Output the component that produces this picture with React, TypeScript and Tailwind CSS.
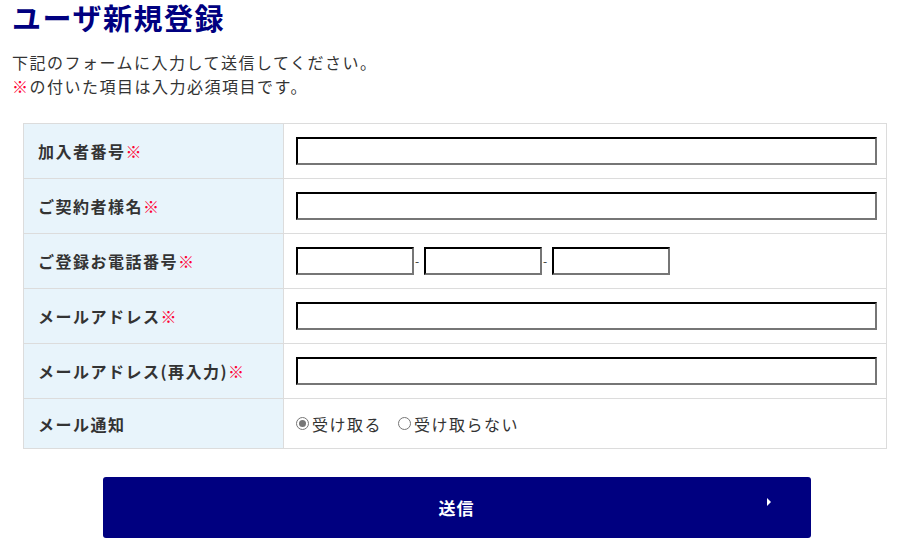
import React from "react";

const inputCls =
  "h-[28px] bg-white border-2 [border-style:inset] border-t-[#1f1f1f] border-l-[#1f1f1f] border-b-[#767676] border-r-[#767676] outline-none";

const Req = () => <span className="text-[#ff0033] font-normal">※</span>;

const rows: { label: string; req: boolean; kind: string }[] = [
  { label: "加入者番号", req: true, kind: "text" },
  { label: "ご契約者様名", req: true, kind: "text" },
  { label: "ご登録お電話番号", req: true, kind: "tel" },
  { label: "メールアドレス", req: true, kind: "text" },
  { label: "メールアドレス(再入力)", req: true, kind: "text" },
  { label: "メール通知", req: false, kind: "radio" },
];

const App = () => {
  return (
    <div className="w-[916px] h-[549px] bg-white overflow-hidden font-['Noto_Sans_CJK_JP','Noto_Sans',sans-serif] text-[#333]">
      <h1 className="pl-[12px] text-[29px] leading-[35px] tracking-[1.5px] font-bold text-[#000080] whitespace-nowrap">
        ユーザ新規登録
      </h1>
      <div className="pl-[12px] mt-[15px] text-[16px] leading-[24px] tracking-[1.5px]">
        <p>下記のフォームに入力して送信してください。</p>
        <p>
          <span className="text-[#ff0033]">※</span>の付いた項目は入力必須項目です。
        </p>
      </div>
      <table className="ml-[23px] mt-[25px] w-[864px] border-collapse">
        <tbody>
          {rows.map((row, i) => (
            <tr key={i} className={row.kind === "radio" ? "h-[50px]" : "h-[55px]"}>
              <th className="w-[260px] bg-[#e8f4fb] border border-[#dcdcdc] text-left pl-[14px] text-[16px] tracking-[1.5px] font-bold text-[#333]">
                {row.label}
                {row.req && <Req />}
              </th>
              <td className="border border-[#dcdcdc] pl-[12px] pr-[9px]">
                {row.kind === "text" && <input className={inputCls + " w-full block"} />}
                {row.kind === "tel" && (
                  <div className="flex items-center">
                    <input className={inputCls + " w-[118px]"} />
                    <span className="text-[12px] w-[10px] text-left pl-[1px]">-</span>
                    <input className={inputCls + " w-[118px]"} />
                    <span className="text-[12px] w-[10px] text-left pl-[1px]">-</span>
                    <input className={inputCls + " w-[118px]"} />
                  </div>
                )}
                {row.kind === "radio" && (
                  <div className="flex items-center text-[16px] tracking-[1.5px] text-[#333]">
                    <label className="flex items-center mr-[16px]">
                      <span className="w-[13px] h-[13px] rounded-full border border-[#767676] flex items-center justify-center mr-[3px]">
                        <span className="w-[7px] h-[7px] rounded-full bg-[#767676]" />
                      </span>
                      受け取る
                    </label>
                    <label className="flex items-center">
                      <span className="w-[13px] h-[13px] rounded-full border border-[#767676] mr-[3px]" />
                      受け取らない
                    </label>
                  </div>
                )}
              </td>
            </tr>
          ))}
        </tbody>
      </table>
      <div className="flex justify-center mt-[28px] pr-[3px]">
        <button className="relative w-[708px] h-[61px] bg-[#000080] rounded-[3px] text-white text-[17px] tracking-[1px] font-bold">
          送信
          <span className="absolute right-[40px] top-[21px] w-0 h-0 border-y-[4px] border-y-transparent border-l-[4px] border-l-white" />
        </button>
      </div>
    </div>
  );
};

export default App;
